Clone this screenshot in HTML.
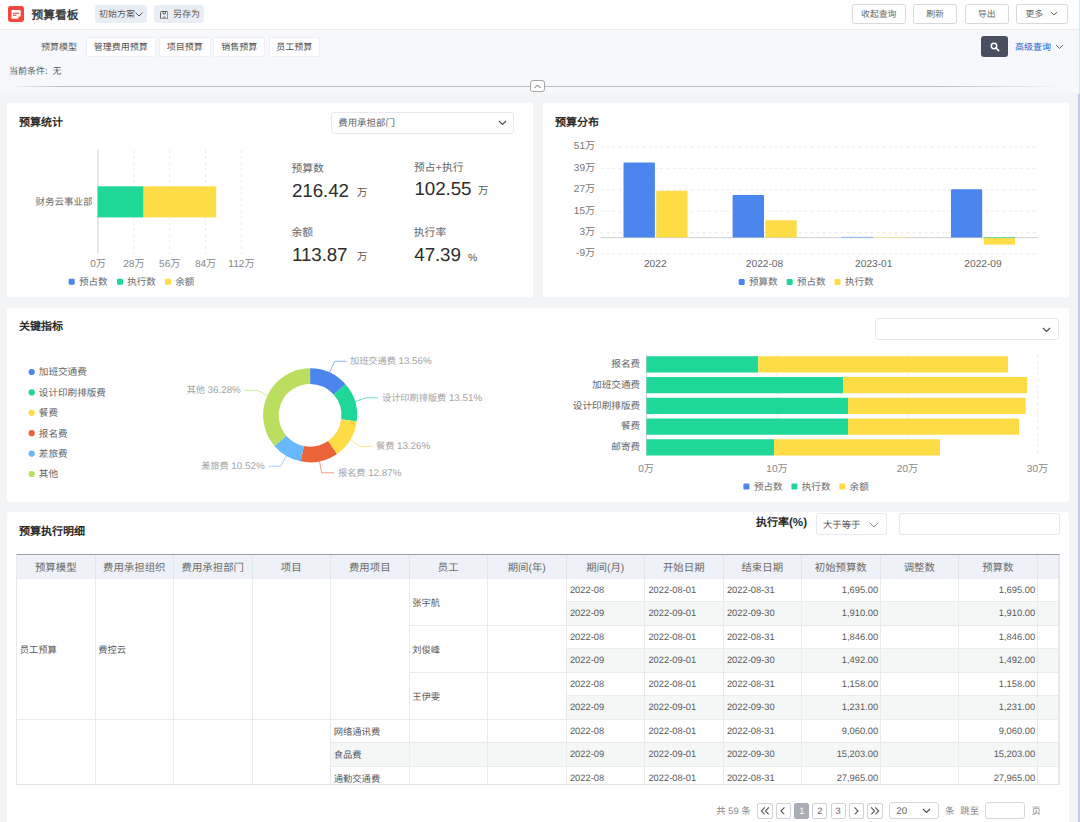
<!DOCTYPE html>
<html lang="zh-CN">
<head>
<meta charset="utf-8">
<title>预算看板</title>
<style>
*{box-sizing:border-box;margin:0;padding:0}
html,body{width:1080px;height:822px;overflow:hidden}
body{position:relative;background:#f3f4f6;font-family:"Liberation Sans",sans-serif;font-size:9.4px;color:#555;line-height:1;text-rendering:geometricPrecision}
svg text{text-rendering:geometricPrecision}
.abs{position:absolute}
.t{position:absolute;white-space:nowrap;line-height:12px;height:12px}
.c{transform:translateX(-50%)}
.r{transform:translateX(-100%)}
/* header */
#hdr{position:absolute;left:0;top:0;width:1080px;height:30px;background:#fff;border-bottom:1px solid #ebebee}
#logo{position:absolute;left:8.3px;top:5.9px;width:16px;height:16px}
#title{position:absolute;left:31.6px;top:8.2px;font-size:11.7px;font-weight:bold;color:#404040;line-height:15px;white-space:nowrap}
.pill{position:absolute;top:5px;height:18px;background:#e9eef5;border-radius:3px;color:#5a5a5a;font-size:9px;line-height:19.4px;white-space:nowrap}
.hbtn{position:absolute;top:4px;height:19.5px;border:1px solid #d9d9d9;border-radius:2.5px;background:#fff;color:#6a6a6a;font-size:8.85px;line-height:19px;text-align:center;white-space:nowrap}
/* filter */
#flt{position:absolute;left:0;top:29.6px;width:1080px;height:63.5px;background:#f7f8fc}
#flt .t{font-size:9px}
.fbtn{position:absolute;top:8px;height:19.5px;background:#fff;border:1px solid #eef0f4;border-radius:2px;color:#505050;font-size:9px;line-height:18.2px;text-align:center;white-space:nowrap}
/* cards */
.card{position:absolute;background:#fff;border-radius:3px}
.ct{position:absolute;font-size:11px;font-weight:bold;color:#2b2b2b;line-height:14px;white-space:nowrap}
.sel{position:absolute;border:1px solid #e7e9ec;border-radius:3px;background:#fff}

.td{position:absolute;border-right:1px solid #e9ebee;border-bottom:1px solid #e9ebee;background:#fff;padding:2.4px 2.7px 0;font-size:9.3px;color:#5a5a5a;white-space:nowrap;overflow:hidden}
.th{background:#eef1f7;color:#6a6a6a;font-size:10.4px;border-right:1px solid #e2e5ea;border-bottom:none;padding:3px 0 0 0}
.num{color:#5a5a5a;font-size:9.35px;padding:1.2px 1.3px 0 3.4px}
.pb{position:absolute;top:802.5px;height:16px;border:1px solid #cfd2d6;border-radius:2px;background:#fff;color:#666;font-size:9.3px;line-height:14px;text-align:center}
.pb svg{position:absolute;left:50%;top:50%;transform:translate(-50%,-50%)}

</style>
</head>
<body>

<!-- ===== header ===== -->
<div id="hdr">
  <svg id="logo" viewBox="0 0 16 16"><rect width="16" height="16" rx="2.4" fill="#f3483b"/><path d="M4.4 3.9h7.4a.9.9 0 0 1 .9.9v4.9l-3 3H4.4a.9.9 0 0 1-.9-.9v-7a.9.9 0 0 1 .9-.9z" fill="#fff"/><path d="M12.7 9.7H10.6a.9.9 0 0 0-.9.9v2.1z" fill="#fbc49a"/><rect x="5" y="6.7" width="6.2" height="1.1" fill="#f3483b"/><rect x="5" y="8.7" width="3.4" height="1.1" fill="#f3483b"/></svg>
  <div id="title">预算看板</div>
  <div class="pill" style="left:94.8px;width:52.6px;padding-left:4.2px">初始方案<svg class="abs" style="left:40.6px;top:7.2px" width="8" height="5" viewBox="0 0 8 5"><path d="M.6.6 4 4 7.4.6" fill="none" stroke="#555" stroke-width="1"/></svg></div>
  <div class="pill" style="left:154px;width:49.8px;padding-left:19px">另存为<svg class="abs" style="left:5.8px;top:5.5px" width="8.4" height="8.4" viewBox="0 0 8.4 8.4"><rect x=".5" y=".5" width="7.4" height="7.4" rx="1" fill="none" stroke="#555" stroke-width=".9"/><path d="M3 .6v2.3h2.4V.6M2.7 6.2h3" fill="none" stroke="#555" stroke-width=".85"/></svg></div>
  <div class="hbtn" style="left:851.5px;width:54.5px">收起查询</div>
  <div class="hbtn" style="left:913px;width:44px">刷新</div>
  <div class="hbtn" style="left:964.5px;width:44.5px">导出</div>
  <div class="hbtn" style="left:1016px;width:51.5px;text-align:left;padding-left:8.5px">更多<svg class="abs" style="left:33px;top:6px" width="8" height="5" viewBox="0 0 8 5"><path d="M.8.8 4 4 7.2.8" fill="none" stroke="#666" stroke-width="1"/></svg></div>
</div>

<!-- ===== filter panel ===== -->
<div id="flt"><div class="abs" style="left:0;top:-0.6px;width:1080px;height:63.5px">
  <div class="t" style="left:41px;top:12px;color:#5a5a5a">预算模型</div>
  <div class="fbtn" style="left:86px;width:69.5px">管理费用预算</div>
  <div class="fbtn" style="left:159px;width:51.5px">项目预算</div>
  <div class="fbtn" style="left:213.3px;width:51.7px">销售预算</div>
  <div class="fbtn" style="left:268.5px;width:51.5px">员工预算</div>
  <div class="t" style="left:9px;top:35.8px;color:#5a5a5a">当前条件:&nbsp; 无</div>
  <div class="abs" style="left:981px;top:7px;width:27px;height:20.5px;background:#4a4f5f;border-radius:3px">
    <svg class="abs" style="left:9px;top:5.5px" width="10" height="10" viewBox="0 0 10 10"><circle cx="4" cy="4" r="2.7" fill="none" stroke="#fff" stroke-width="1.5"/><path d="M6 6l2.6 2.6" stroke="#fff" stroke-width="1.7" stroke-linecap="round"/></svg>
  </div>
  <div class="t" style="left:1015px;top:11.5px;font-size:9px;color:#2c66cc">高级查询</div>
  <svg class="abs" style="left:1054.5px;top:15px" width="9" height="6" viewBox="0 0 9 6"><path d="M1 1l3.5 3.5L8 1" fill="none" stroke="#666" stroke-width="1"/></svg>
  <div class="abs" style="left:9px;top:56.8px;width:1056px;height:1px;background:linear-gradient(90deg,rgba(185,188,192,0),#b9bcc0 5%,#b9bcc0 88%,rgba(185,188,192,0))"></div>
  <div class="abs" style="left:530px;top:51.2px;width:15px;height:11.6px;border:1px solid #a6a6a6;border-radius:3px;background:#fff">
    <svg class="abs" style="left:3px;top:2.6px" width="7" height="4.5" viewBox="0 0 7 4.5"><path d="M.5 4 3.5 1 6.5 4" fill="none" stroke="#666" stroke-width="1"/></svg>
  </div>
</div></div>

<!-- ===== cards ===== -->
<div class="card" id="c1" style="left:7px;top:102.5px;width:526px;height:194.5px"></div>
<div class="card" id="c2" style="left:543px;top:102.5px;width:526px;height:194.5px"></div>
<div class="card" id="c3" style="left:7px;top:307.5px;width:1062px;height:194.5px"></div>
<div class="card" id="c4" style="left:7px;top:511.5px;width:1062px;height:320px"></div>

<svg class="abs" style="left:0;top:0" width="1080" height="822" viewBox="0 0 1080 822" font-family="Liberation Sans, sans-serif">
<path d="M133.85 150.0V253.7" stroke="#ececec" stroke-width="1" stroke-dasharray="3 3"/>
<path d="M169.70 150.0V253.7" stroke="#ececec" stroke-width="1" stroke-dasharray="3 3"/>
<path d="M205.55 150.0V253.7" stroke="#ececec" stroke-width="1" stroke-dasharray="3 3"/>
<path d="M241.40 150.0V253.7" stroke="#ececec" stroke-width="1" stroke-dasharray="3 3"/>
<path d="M98.0 150.0V253.7" stroke="#cfcfcf" stroke-width="1"/>
<rect x="97.6" y="186.3" width="46.00" height="31.1" fill="#1fd797"/>
<rect x="143.6" y="186.3" width="72.60" height="31.1" fill="#fddc46"/>
<text x="92.40" y="204.72" font-size="9.5" fill="#6b6b6b" text-anchor="end">财务云事业部</text>
<text x="98.00" y="267.34" font-size="10.1" fill="#888" text-anchor="middle">0万</text>
<text x="133.85" y="267.34" font-size="10.1" fill="#888" text-anchor="middle">28万</text>
<text x="169.70" y="267.34" font-size="10.1" fill="#888" text-anchor="middle">56万</text>
<text x="205.55" y="267.34" font-size="10.1" fill="#888" text-anchor="middle">84万</text>
<text x="241.40" y="267.34" font-size="10.1" fill="#888" text-anchor="middle">112万</text>
<rect x="68.7" y="278.7" width="6" height="6" rx="1.2" fill="#4b86ee"/>
<text x="79.00" y="284.84" font-size="9.55" fill="#6b6b6b" text-anchor="start">预占数</text>
<rect x="117" y="278.7" width="6" height="6" rx="1.2" fill="#1fd797"/>
<text x="127.20" y="284.84" font-size="9.55" fill="#6b6b6b" text-anchor="start">执行数</text>
<rect x="165" y="278.7" width="6" height="6" rx="1.2" fill="#fddc46"/>
<text x="175.20" y="284.84" font-size="9.55" fill="#6b6b6b" text-anchor="start">余额</text>
<path d="M600.5 147.00H1038.0" stroke="#ebebeb" stroke-width="1" stroke-dasharray="3 3"/>
<text x="595.20" y="149.44" font-size="10.1" fill="#777" text-anchor="end">51万</text>
<path d="M600.5 168.40H1038.0" stroke="#ebebeb" stroke-width="1" stroke-dasharray="3 3"/>
<text x="595.20" y="170.84" font-size="10.1" fill="#777" text-anchor="end">39万</text>
<path d="M600.5 189.80H1038.0" stroke="#ebebeb" stroke-width="1" stroke-dasharray="3 3"/>
<text x="595.20" y="192.24" font-size="10.1" fill="#777" text-anchor="end">27万</text>
<path d="M600.5 211.20H1038.0" stroke="#ebebeb" stroke-width="1" stroke-dasharray="3 3"/>
<text x="595.20" y="213.64" font-size="10.1" fill="#777" text-anchor="end">15万</text>
<path d="M600.5 232.60H1038.0" stroke="#ebebeb" stroke-width="1" stroke-dasharray="3 3"/>
<text x="595.20" y="235.04" font-size="10.1" fill="#777" text-anchor="end">3万</text>
<path d="M600.5 254.00H1038.0" stroke="#ebebeb" stroke-width="1" stroke-dasharray="3 3"/>
<text x="595.20" y="256.44" font-size="10.1" fill="#777" text-anchor="end">-9万</text>
<path d="M600.5 237.6H1038.0" stroke="#cfcfcf" stroke-width="1"/>
<path d="M623.50 237.6V163.70Q623.50 162.50 624.70 162.50H653.70Q654.90 162.50 654.90 163.70V237.6Z" fill="#4b86ee"/>
<path d="M656.20 237.6V192.00Q656.20 190.80 657.40 190.80H686.40Q687.60 190.80 687.60 192.00V237.6Z" fill="#fddc46"/>
<path d="M732.60 237.6V196.20Q732.60 195.00 733.80 195.00H762.80Q764.00 195.00 764.00 196.20V237.6Z" fill="#4b86ee"/>
<path d="M765.30 237.6V221.50Q765.30 220.30 766.50 220.30H795.50Q796.70 220.30 796.70 221.50V237.6Z" fill="#fddc46"/>
<rect x="841.6" y="236.9" width="31.4" height="0.9" fill="#7fb0f5"/>
<rect x="874.4" y="236.9" width="31.4" height="0.9" fill="#f3e79a"/>
<path d="M951.00 237.6V190.50Q951.00 189.30 952.20 189.30H981.00Q982.20 189.30 982.20 190.50V237.6Z" fill="#4b86ee"/>
<rect x="983.8" y="237.6" width="31.2" height="7" fill="#fddc46"/>
<rect x="983.8" y="237.1" width="31.2" height="1" fill="#6fd9a0"/>
<text x="655.25" y="267.42" font-size="10.2" fill="#666" text-anchor="middle">2022</text>
<text x="764.50" y="267.42" font-size="10.2" fill="#666" text-anchor="middle">2022-08</text>
<text x="873.75" y="267.42" font-size="10.2" fill="#666" text-anchor="middle">2023-01</text>
<text x="983.00" y="267.42" font-size="10.2" fill="#666" text-anchor="middle">2022-09</text>
<rect x="738.7" y="279" width="6" height="6" rx="1.2" fill="#4b86ee"/>
<text x="749.00" y="285.44" font-size="9.55" fill="#6b6b6b" text-anchor="start">预算数</text>
<rect x="786.7" y="279" width="6" height="6" rx="1.2" fill="#1fd797"/>
<text x="797.00" y="285.44" font-size="9.55" fill="#6b6b6b" text-anchor="start">预占数</text>
<rect x="834.5" y="279" width="6" height="6" rx="1.2" fill="#fddc46"/>
<text x="845.00" y="285.44" font-size="9.55" fill="#6b6b6b" text-anchor="start">执行数</text>
<circle cx="31.7" cy="372.00" r="3.1" fill="#4b86ee"/>
<text x="38.80" y="375.46" font-size="9.6" fill="#666" text-anchor="start">加班交通费</text>
<circle cx="31.7" cy="392.40" r="3.1" fill="#1fd797"/>
<text x="38.80" y="395.86" font-size="9.6" fill="#666" text-anchor="start">设计印刷排版费</text>
<circle cx="31.7" cy="412.80" r="3.1" fill="#fddc46"/>
<text x="38.80" y="416.26" font-size="9.6" fill="#666" text-anchor="start">餐费</text>
<circle cx="31.7" cy="433.20" r="3.1" fill="#eb6339"/>
<text x="38.80" y="436.66" font-size="9.6" fill="#666" text-anchor="start">报名费</text>
<circle cx="31.7" cy="453.60" r="3.1" fill="#68b8fd"/>
<text x="38.80" y="457.06" font-size="9.6" fill="#666" text-anchor="start">差旅费</text>
<circle cx="31.7" cy="474.00" r="3.1" fill="#bbde5e"/>
<text x="38.80" y="477.46" font-size="9.6" fill="#666" text-anchor="start">其他</text>
<path d="M310.10 368.30A47.0 47.0 0 0 1 345.47 384.35L333.73 394.62A31.4 31.4 0 0 0 310.10 383.90Z" fill="#4b86ee"/>
<path d="M345.47 384.35A47.0 47.0 0 0 1 356.70 421.40L341.23 419.37A31.4 31.4 0 0 0 333.73 394.62Z" fill="#1fd797"/>
<path d="M356.70 421.40A47.0 47.0 0 0 1 336.93 453.89L328.03 441.08A31.4 31.4 0 0 0 341.23 419.37Z" fill="#fddc46"/>
<path d="M336.93 453.89A47.0 47.0 0 0 1 300.71 461.35L303.83 446.07A31.4 31.4 0 0 0 328.03 441.08Z" fill="#eb6339"/>
<path d="M300.71 461.35A47.0 47.0 0 0 1 274.42 445.89L286.26 435.74A31.4 31.4 0 0 0 303.83 446.07Z" fill="#68b8fd"/>
<path d="M274.42 445.89A47.0 47.0 0 0 1 310.10 368.30L310.10 383.90A31.4 31.4 0 0 0 286.26 435.74Z" fill="#bbde5e"/>
<path d="M329.52 372.50L334.7 361.3H346.5" fill="none" stroke="#4b86ee" stroke-width="0.9" stroke-opacity="0.7"/>
<text x="350.00" y="364.01" font-size="9.2" fill="#a3a3a3" text-anchor="start">加班交通费 <tspan font-size="9.8">13.56%</tspan></text>
<path d="M355.08 401.66L366.0 397.8H378.0" fill="none" stroke="#1fd797" stroke-width="0.9" stroke-opacity="0.7"/>
<text x="382.00" y="400.51" font-size="9.2" fill="#a3a3a3" text-anchor="start">设计印刷排版费 <tspan font-size="9.8">13.51%</tspan></text>
<path d="M350.25 439.73L360.0 446.4H372.6" fill="none" stroke="#fddc46" stroke-width="0.9" stroke-opacity="0.7"/>
<text x="376.00" y="449.11" font-size="9.2" fill="#a3a3a3" text-anchor="start">餐费 <tspan font-size="9.8">13.26%</tspan></text>
<path d="M319.59 461.33L321.6 472.8H334.0" fill="none" stroke="#eb6339" stroke-width="0.9" stroke-opacity="0.7"/>
<text x="338.00" y="475.51" font-size="9.2" fill="#a3a3a3" text-anchor="start">报名费 <tspan font-size="9.8">12.87%</tspan></text>
<path d="M286.28 455.81L280.7 466.2H268.9" fill="none" stroke="#68b8fd" stroke-width="0.9" stroke-opacity="0.7"/>
<text x="264.60" y="468.91" font-size="9.2" fill="#a3a3a3" text-anchor="end">差旅费 <tspan font-size="9.8">10.52%</tspan></text>
<path d="M267.40 395.66L257.6 390.4H244.6" fill="none" stroke="#bbde5e" stroke-width="0.9" stroke-opacity="0.7"/>
<text x="240.80" y="393.11" font-size="9.2" fill="#a3a3a3" text-anchor="end">其他 <tspan font-size="9.8">36.28%</tspan></text>
<path d="M907.5 354.5V456.3" stroke="#ececec" stroke-width="1" stroke-dasharray="3 3"/>
<path d="M777 354.5V456.3" stroke="#ececec" stroke-width="1" stroke-dasharray="3 3"/>
<path d="M1037.5 354.5V456.3" stroke="#ededed" stroke-width="1" stroke-dasharray="3 3"/>
<path d="M646.5 354.5V456.3" stroke="#cfcfcf" stroke-width="1"/>
<rect x="646.5" y="356.25" width="111.75" height="16.25" fill="#1fd797"/>
<rect x="758.25" y="356.25" width="249.75" height="16.25" fill="#fddc46"/>
<text x="640.20" y="367.22" font-size="9.65" fill="#666" text-anchor="end">报名费</text>
<rect x="646.5" y="377.00" width="196.80" height="16.25" fill="#1fd797"/>
<rect x="843.3" y="377.00" width="183.90" height="16.25" fill="#fddc46"/>
<text x="640.20" y="387.97" font-size="9.65" fill="#666" text-anchor="end">加班交通费</text>
<rect x="646.5" y="397.75" width="201.50" height="16.25" fill="#1fd797"/>
<rect x="848.0" y="397.75" width="177.70" height="16.25" fill="#fddc46"/>
<text x="640.20" y="408.72" font-size="9.65" fill="#666" text-anchor="end">设计印刷排版费</text>
<rect x="646.5" y="418.50" width="201.50" height="16.25" fill="#1fd797"/>
<rect x="848.0" y="418.50" width="171.00" height="16.25" fill="#fddc46"/>
<text x="640.20" y="429.47" font-size="9.65" fill="#666" text-anchor="end">餐费</text>
<rect x="646.5" y="439.25" width="127.50" height="16.25" fill="#1fd797"/>
<rect x="774.0" y="439.25" width="166.00" height="16.25" fill="#fddc46"/>
<text x="640.20" y="450.22" font-size="9.65" fill="#666" text-anchor="end">邮寄费</text>
<text x="646.00" y="471.64" font-size="10.1" fill="#888" text-anchor="middle">0万</text>
<text x="777.00" y="471.64" font-size="10.1" fill="#888" text-anchor="middle">10万</text>
<text x="907.50" y="471.64" font-size="10.1" fill="#888" text-anchor="middle">20万</text>
<text x="1037.50" y="471.64" font-size="10.1" fill="#888" text-anchor="middle">30万</text>
<rect x="743.4" y="483.5" width="6" height="6" rx="1.2" fill="#4b86ee"/>
<text x="754.00" y="489.94" font-size="9.55" fill="#6b6b6b" text-anchor="start">预占数</text>
<rect x="791.4" y="483.5" width="6" height="6" rx="1.2" fill="#1fd797"/>
<text x="801.80" y="489.94" font-size="9.55" fill="#6b6b6b" text-anchor="start">执行数</text>
<rect x="839.3" y="483.5" width="6" height="6" rx="1.2" fill="#fddc46"/>
<text x="849.60" y="489.94" font-size="9.55" fill="#6b6b6b" text-anchor="start">余额</text>
</svg>
<div class="ct" style="left:19.0px;top:116.3px">预算统计</div>
<div class="ct" style="left:555.0px;top:116.2px">预算分布</div>
<div class="ct" style="left:19.0px;top:320.4px">关键指标</div>
<div class="ct" style="left:19.0px;top:524.9px">预算执行明细</div>
<div class="sel" style="left:331.2px;top:111.8px;width:182.5px;height:21.8px"><span class="t" style="left:6px;top:5.6px;color:#666;font-size:9.45px">费用承担部门</span><svg class="abs" style="right:6.2px;top:7.2px" width="9" height="6" viewBox="0 0 9 6"><path d="M1 1l3.5 3.5L8 1" fill="none" stroke="#4a4a4a" stroke-width="1.15"/></svg></div>
<div class="sel" style="left:875.3px;top:318px;width:183.6px;height:21.8px"><svg class="abs" style="right:7.3px;top:7.8px" width="9" height="6" viewBox="0 0 9 6"><path d="M1 1l3.5 3.5L8 1" fill="none" stroke="#4a4a4a" stroke-width="1.15"/></svg></div>
<div class="t" style="left:291.5px;top:162.0px;font-size:10.8px;line-height:14px;height:14px;color:#666">预算数</div>
<div class="t" style="left:292.0px;top:181.7px;font-size:18.8px;line-height:18.8px;height:18.8px;color:#2e2e2e;letter-spacing:-0.1px">216.42</div>
<div class="t" style="left:357px;top:187.0px;font-size:10.4px;line-height:14px;height:14px;color:#555">万</div>
<div class="t" style="left:414px;top:161.2px;font-size:10.8px;line-height:14px;height:14px;color:#666">预占+执行</div>
<div class="t" style="left:414.5px;top:179.7px;font-size:18.8px;line-height:18.8px;height:18.8px;color:#2e2e2e;letter-spacing:-0.1px">102.55</div>
<div class="t" style="left:478px;top:185.3px;font-size:10.4px;line-height:14px;height:14px;color:#555">万</div>
<div class="t" style="left:291.5px;top:225.9px;font-size:10.8px;line-height:14px;height:14px;color:#666">余额</div>
<div class="t" style="left:292.0px;top:246.3px;font-size:18.8px;line-height:18.8px;height:18.8px;color:#2e2e2e;letter-spacing:-0.1px">113.87</div>
<div class="t" style="left:357px;top:251.3px;font-size:10.4px;line-height:14px;height:14px;color:#555">万</div>
<div class="t" style="left:413.8px;top:226.3px;font-size:10.8px;line-height:14px;height:14px;color:#666">执行率</div>
<div class="t" style="left:414.3px;top:246.0px;font-size:18.8px;line-height:18.8px;height:18.8px;color:#2e2e2e;letter-spacing:-0.1px">47.39</div>
<div class="t" style="left:468px;top:252.2px;font-size:10.4px;line-height:14px;height:14px;color:#555">%</div>
<div class="t" style="left:756px;top:516.2px;font-size:11px;font-weight:bold;color:#2b2b2b;line-height:14px;height:14px">执行率<span style="font-size:11.6px">(%)</span></div>
<div class="sel" style="left:816.2px;top:513.4px;width:70.6px;height:21.4px"><span class="t" style="left:5.8px;top:4.4px;color:#555">大于等于</span><svg class="abs" style="right:6.8px;top:7.4px" width="10" height="6" viewBox="0 0 10 6"><path d="M.8.8 5 5 9.2.8" fill="none" stroke="#8a8a8a" stroke-width="1"/></svg></div>
<div class="sel" style="left:899.2px;top:513.4px;width:160.6px;height:21.4px"></div>
<div class="abs" style="left:16.0px;top:554px;width:1044.0px;height:231.0px;overflow:hidden;border-top:1px solid #9aa1ab;border-bottom:1px solid #e3e5e8;border-right:1px solid #dfe2e6;border-left:1px solid #e6e8eb">
<div class="td th" style="left:0.00px;top:0.00px;width:78.50px;height:23.50px;line-height:21.50px;text-align:center;">预算模型</div>
<div class="td th" style="left:78.50px;top:0.00px;width:78.50px;height:23.50px;line-height:21.50px;text-align:center;">费用承担组织</div>
<div class="td th" style="left:157.00px;top:0.00px;width:78.50px;height:23.50px;line-height:21.50px;text-align:center;">费用承担部门</div>
<div class="td th" style="left:235.50px;top:0.00px;width:78.50px;height:23.50px;line-height:21.50px;text-align:center;">项目</div>
<div class="td th" style="left:314.00px;top:0.00px;width:78.50px;height:23.50px;line-height:21.50px;text-align:center;">费用项目</div>
<div class="td th" style="left:392.50px;top:0.00px;width:78.50px;height:23.50px;line-height:21.50px;text-align:center;">员工</div>
<div class="td th" style="left:471.00px;top:0.00px;width:78.50px;height:23.50px;line-height:21.50px;text-align:center;">期间(年)</div>
<div class="td th" style="left:549.50px;top:0.00px;width:78.50px;height:23.50px;line-height:21.50px;text-align:center;">期间(月)</div>
<div class="td th" style="left:628.00px;top:0.00px;width:78.50px;height:23.50px;line-height:21.50px;text-align:center;">开始日期</div>
<div class="td th" style="left:706.50px;top:0.00px;width:78.50px;height:23.50px;line-height:21.50px;text-align:center;">结束日期</div>
<div class="td th" style="left:785.00px;top:0.00px;width:78.50px;height:23.50px;line-height:21.50px;text-align:center;">初始预算数</div>
<div class="td th" style="left:863.50px;top:0.00px;width:78.50px;height:23.50px;line-height:21.50px;text-align:center;">调整数</div>
<div class="td th" style="left:942.00px;top:0.00px;width:78.50px;height:23.50px;line-height:21.50px;text-align:center;">预算数</div>
<div class="td th" style="left:1020.50px;top:0.00px;width:21.50px;height:23.50px;line-height:21.50px;text-align:center;"></div>
<div class="td " style="left:0.00px;top:23.50px;width:78.50px;height:141.00px;line-height:139.00px;text-align:left;">员工预算</div>
<div class="td " style="left:78.50px;top:23.50px;width:78.50px;height:141.00px;line-height:139.00px;text-align:left;">费控云</div>
<div class="td " style="left:157.00px;top:23.50px;width:78.50px;height:141.00px;line-height:139.00px;text-align:left;"></div>
<div class="td " style="left:235.50px;top:23.50px;width:78.50px;height:141.00px;line-height:139.00px;text-align:left;"></div>
<div class="td " style="left:314.00px;top:23.50px;width:78.50px;height:141.00px;line-height:139.00px;text-align:left;"></div>
<div class="td " style="left:392.50px;top:23.50px;width:78.50px;height:47.00px;line-height:45.00px;text-align:left;">张宇航</div>
<div class="td " style="left:471.00px;top:23.50px;width:78.50px;height:47.00px;line-height:45.00px;text-align:left;"></div>
<div class="td " style="left:392.50px;top:70.50px;width:78.50px;height:47.00px;line-height:45.00px;text-align:left;">刘俊峰</div>
<div class="td " style="left:471.00px;top:70.50px;width:78.50px;height:47.00px;line-height:45.00px;text-align:left;"></div>
<div class="td " style="left:392.50px;top:117.50px;width:78.50px;height:47.00px;line-height:45.00px;text-align:left;">王伊雯</div>
<div class="td " style="left:471.00px;top:117.50px;width:78.50px;height:47.00px;line-height:45.00px;text-align:left;"></div>
<div class="td " style="left:0.00px;top:164.50px;width:78.50px;height:94.00px;line-height:92.00px;text-align:left;"></div>
<div class="td " style="left:78.50px;top:164.50px;width:78.50px;height:94.00px;line-height:92.00px;text-align:left;"></div>
<div class="td " style="left:157.00px;top:164.50px;width:78.50px;height:94.00px;line-height:92.00px;text-align:left;"></div>
<div class="td " style="left:235.50px;top:164.50px;width:78.50px;height:94.00px;line-height:92.00px;text-align:left;"></div>
<div class="td " style="left:314.00px;top:164.50px;width:78.50px;height:23.50px;line-height:21.50px;text-align:left;">网络通讯费</div>
<div class="td " style="left:392.50px;top:164.50px;width:78.50px;height:23.50px;line-height:21.50px;text-align:left;"></div>
<div class="td " style="left:471.00px;top:164.50px;width:78.50px;height:23.50px;line-height:21.50px;text-align:left;"></div>
<div class="td " style="left:314.00px;top:188.00px;width:78.50px;height:23.50px;line-height:21.50px;text-align:left;background:#f5f7f7;">食品费</div>
<div class="td " style="left:392.50px;top:188.00px;width:78.50px;height:23.50px;line-height:21.50px;text-align:left;background:#f5f7f7;"></div>
<div class="td " style="left:471.00px;top:188.00px;width:78.50px;height:23.50px;line-height:21.50px;text-align:left;background:#f5f7f7;"></div>
<div class="td " style="left:314.00px;top:211.50px;width:78.50px;height:23.50px;line-height:21.50px;text-align:left;">通勤交通费</div>
<div class="td " style="left:392.50px;top:211.50px;width:78.50px;height:23.50px;line-height:21.50px;text-align:left;"></div>
<div class="td " style="left:471.00px;top:211.50px;width:78.50px;height:23.50px;line-height:21.50px;text-align:left;"></div>
<div class="td num" style="left:549.50px;top:23.50px;width:78.50px;height:23.50px;line-height:21.50px;text-align:left;">2022-08</div>
<div class="td num" style="left:628.00px;top:23.50px;width:78.50px;height:23.50px;line-height:21.50px;text-align:left;">2022-08-01</div>
<div class="td num" style="left:706.50px;top:23.50px;width:78.50px;height:23.50px;line-height:21.50px;text-align:left;">2022-08-31</div>
<div class="td num" style="left:785.00px;top:23.50px;width:78.50px;height:23.50px;line-height:21.50px;text-align:right;">1,695.00</div>
<div class="td num" style="left:863.50px;top:23.50px;width:78.50px;height:23.50px;line-height:21.50px;text-align:right;"></div>
<div class="td num" style="left:942.00px;top:23.50px;width:78.50px;height:23.50px;line-height:21.50px;text-align:right;">1,695.00</div>
<div class="td " style="left:1020.50px;top:23.50px;width:21.50px;height:23.50px;line-height:21.50px;text-align:left;"></div>
<div class="td num" style="left:549.50px;top:47.00px;width:78.50px;height:23.50px;line-height:21.50px;text-align:left;background:#f5f7f7;">2022-09</div>
<div class="td num" style="left:628.00px;top:47.00px;width:78.50px;height:23.50px;line-height:21.50px;text-align:left;background:#f5f7f7;">2022-09-01</div>
<div class="td num" style="left:706.50px;top:47.00px;width:78.50px;height:23.50px;line-height:21.50px;text-align:left;background:#f5f7f7;">2022-09-30</div>
<div class="td num" style="left:785.00px;top:47.00px;width:78.50px;height:23.50px;line-height:21.50px;text-align:right;background:#f5f7f7;">1,910.00</div>
<div class="td num" style="left:863.50px;top:47.00px;width:78.50px;height:23.50px;line-height:21.50px;text-align:right;background:#f5f7f7;"></div>
<div class="td num" style="left:942.00px;top:47.00px;width:78.50px;height:23.50px;line-height:21.50px;text-align:right;background:#f5f7f7;">1,910.00</div>
<div class="td " style="left:1020.50px;top:47.00px;width:21.50px;height:23.50px;line-height:21.50px;text-align:left;background:#f5f7f7;"></div>
<div class="td num" style="left:549.50px;top:70.50px;width:78.50px;height:23.50px;line-height:21.50px;text-align:left;">2022-08</div>
<div class="td num" style="left:628.00px;top:70.50px;width:78.50px;height:23.50px;line-height:21.50px;text-align:left;">2022-08-01</div>
<div class="td num" style="left:706.50px;top:70.50px;width:78.50px;height:23.50px;line-height:21.50px;text-align:left;">2022-08-31</div>
<div class="td num" style="left:785.00px;top:70.50px;width:78.50px;height:23.50px;line-height:21.50px;text-align:right;">1,846.00</div>
<div class="td num" style="left:863.50px;top:70.50px;width:78.50px;height:23.50px;line-height:21.50px;text-align:right;"></div>
<div class="td num" style="left:942.00px;top:70.50px;width:78.50px;height:23.50px;line-height:21.50px;text-align:right;">1,846.00</div>
<div class="td " style="left:1020.50px;top:70.50px;width:21.50px;height:23.50px;line-height:21.50px;text-align:left;"></div>
<div class="td num" style="left:549.50px;top:94.00px;width:78.50px;height:23.50px;line-height:21.50px;text-align:left;background:#f5f7f7;">2022-09</div>
<div class="td num" style="left:628.00px;top:94.00px;width:78.50px;height:23.50px;line-height:21.50px;text-align:left;background:#f5f7f7;">2022-09-01</div>
<div class="td num" style="left:706.50px;top:94.00px;width:78.50px;height:23.50px;line-height:21.50px;text-align:left;background:#f5f7f7;">2022-09-30</div>
<div class="td num" style="left:785.00px;top:94.00px;width:78.50px;height:23.50px;line-height:21.50px;text-align:right;background:#f5f7f7;">1,492.00</div>
<div class="td num" style="left:863.50px;top:94.00px;width:78.50px;height:23.50px;line-height:21.50px;text-align:right;background:#f5f7f7;"></div>
<div class="td num" style="left:942.00px;top:94.00px;width:78.50px;height:23.50px;line-height:21.50px;text-align:right;background:#f5f7f7;">1,492.00</div>
<div class="td " style="left:1020.50px;top:94.00px;width:21.50px;height:23.50px;line-height:21.50px;text-align:left;background:#f5f7f7;"></div>
<div class="td num" style="left:549.50px;top:117.50px;width:78.50px;height:23.50px;line-height:21.50px;text-align:left;">2022-08</div>
<div class="td num" style="left:628.00px;top:117.50px;width:78.50px;height:23.50px;line-height:21.50px;text-align:left;">2022-08-01</div>
<div class="td num" style="left:706.50px;top:117.50px;width:78.50px;height:23.50px;line-height:21.50px;text-align:left;">2022-08-31</div>
<div class="td num" style="left:785.00px;top:117.50px;width:78.50px;height:23.50px;line-height:21.50px;text-align:right;">1,158.00</div>
<div class="td num" style="left:863.50px;top:117.50px;width:78.50px;height:23.50px;line-height:21.50px;text-align:right;"></div>
<div class="td num" style="left:942.00px;top:117.50px;width:78.50px;height:23.50px;line-height:21.50px;text-align:right;">1,158.00</div>
<div class="td " style="left:1020.50px;top:117.50px;width:21.50px;height:23.50px;line-height:21.50px;text-align:left;"></div>
<div class="td num" style="left:549.50px;top:141.00px;width:78.50px;height:23.50px;line-height:21.50px;text-align:left;background:#f5f7f7;">2022-09</div>
<div class="td num" style="left:628.00px;top:141.00px;width:78.50px;height:23.50px;line-height:21.50px;text-align:left;background:#f5f7f7;">2022-09-01</div>
<div class="td num" style="left:706.50px;top:141.00px;width:78.50px;height:23.50px;line-height:21.50px;text-align:left;background:#f5f7f7;">2022-09-30</div>
<div class="td num" style="left:785.00px;top:141.00px;width:78.50px;height:23.50px;line-height:21.50px;text-align:right;background:#f5f7f7;">1,231.00</div>
<div class="td num" style="left:863.50px;top:141.00px;width:78.50px;height:23.50px;line-height:21.50px;text-align:right;background:#f5f7f7;"></div>
<div class="td num" style="left:942.00px;top:141.00px;width:78.50px;height:23.50px;line-height:21.50px;text-align:right;background:#f5f7f7;">1,231.00</div>
<div class="td " style="left:1020.50px;top:141.00px;width:21.50px;height:23.50px;line-height:21.50px;text-align:left;background:#f5f7f7;"></div>
<div class="td num" style="left:549.50px;top:164.50px;width:78.50px;height:23.50px;line-height:21.50px;text-align:left;">2022-08</div>
<div class="td num" style="left:628.00px;top:164.50px;width:78.50px;height:23.50px;line-height:21.50px;text-align:left;">2022-08-01</div>
<div class="td num" style="left:706.50px;top:164.50px;width:78.50px;height:23.50px;line-height:21.50px;text-align:left;">2022-08-31</div>
<div class="td num" style="left:785.00px;top:164.50px;width:78.50px;height:23.50px;line-height:21.50px;text-align:right;">9,060.00</div>
<div class="td num" style="left:863.50px;top:164.50px;width:78.50px;height:23.50px;line-height:21.50px;text-align:right;"></div>
<div class="td num" style="left:942.00px;top:164.50px;width:78.50px;height:23.50px;line-height:21.50px;text-align:right;">9,060.00</div>
<div class="td " style="left:1020.50px;top:164.50px;width:21.50px;height:23.50px;line-height:21.50px;text-align:left;"></div>
<div class="td num" style="left:549.50px;top:188.00px;width:78.50px;height:23.50px;line-height:21.50px;text-align:left;background:#f5f7f7;">2022-09</div>
<div class="td num" style="left:628.00px;top:188.00px;width:78.50px;height:23.50px;line-height:21.50px;text-align:left;background:#f5f7f7;">2022-09-01</div>
<div class="td num" style="left:706.50px;top:188.00px;width:78.50px;height:23.50px;line-height:21.50px;text-align:left;background:#f5f7f7;">2022-09-30</div>
<div class="td num" style="left:785.00px;top:188.00px;width:78.50px;height:23.50px;line-height:21.50px;text-align:right;background:#f5f7f7;">15,203.00</div>
<div class="td num" style="left:863.50px;top:188.00px;width:78.50px;height:23.50px;line-height:21.50px;text-align:right;background:#f5f7f7;"></div>
<div class="td num" style="left:942.00px;top:188.00px;width:78.50px;height:23.50px;line-height:21.50px;text-align:right;background:#f5f7f7;">15,203.00</div>
<div class="td " style="left:1020.50px;top:188.00px;width:21.50px;height:23.50px;line-height:21.50px;text-align:left;background:#f5f7f7;"></div>
<div class="td num" style="left:549.50px;top:211.50px;width:78.50px;height:23.50px;line-height:21.50px;text-align:left;">2022-08</div>
<div class="td num" style="left:628.00px;top:211.50px;width:78.50px;height:23.50px;line-height:21.50px;text-align:left;">2022-08-01</div>
<div class="td num" style="left:706.50px;top:211.50px;width:78.50px;height:23.50px;line-height:21.50px;text-align:left;">2022-08-31</div>
<div class="td num" style="left:785.00px;top:211.50px;width:78.50px;height:23.50px;line-height:21.50px;text-align:right;">27,965.00</div>
<div class="td num" style="left:863.50px;top:211.50px;width:78.50px;height:23.50px;line-height:21.50px;text-align:right;"></div>
<div class="td num" style="left:942.00px;top:211.50px;width:78.50px;height:23.50px;line-height:21.50px;text-align:right;">27,965.00</div>
<div class="td " style="left:1020.50px;top:211.50px;width:21.50px;height:23.50px;line-height:21.50px;text-align:left;"></div>
</div>
<div class="t" style="left:716.2px;top:804.5px;color:#888">共 59 条</div>
<div class="pb" style="left:757px;width:15.6px;"><svg width="9.9" height="8.8" viewBox="0 0 9 8"><path d="M4.3 .8 1.2 4l3.1 3.2M8 .8 4.9 4 8 7.2" fill="none" stroke="#5a5a5a" stroke-width="1.02"/></svg></div>
<div class="pb" style="left:775.8px;width:15.3px;"><svg width="9.9" height="8.8" viewBox="0 0 9 8"><path d="M5.8 .8 2.7 4l3.1 3.2" fill="none" stroke="#5a5a5a" stroke-width="1.02"/></svg></div>
<div class="pb" style="left:794.2px;width:15.2px;background:#a9adb5;border-color:#a9adb5;color:#fff;">1</div>
<div class="pb" style="left:812.2px;width:15.2px;">2</div>
<div class="pb" style="left:830.5px;width:15.2px;">3</div>
<div class="pb" style="left:848.8px;width:15.2px;"><svg width="9.9" height="8.8" viewBox="0 0 9 8"><path d="M3.2 .8 6.3 4 3.2 7.2" fill="none" stroke="#5a5a5a" stroke-width="1.02"/></svg></div>
<div class="pb" style="left:867px;width:15.6px;"><svg width="9.9" height="8.8" viewBox="0 0 9 8"><path d="M1 .8 4.1 4 1 7.2M4.7 .8 7.8 4 4.7 7.2" fill="none" stroke="#5a5a5a" stroke-width="1.02"/></svg></div>
<div class="sel" style="left:889px;top:802px;width:50px;height:17px;border-color:#d6d8dc"><span class="t" style="left:6.2px;top:3px;color:#666;font-size:9.8px">20</span><svg class="abs" style="right:7.3px;top:5.3px" width="9" height="6" viewBox="0 0 9 6"><path d="M1 1l3.5 3.5L8 1" fill="none" stroke="#4a4a4a" stroke-width="1.15"/></svg></div>
<div class="t" style="left:945px;top:804.5px;color:#888">条</div>
<div class="t" style="left:960.3px;top:804.5px;color:#888">跳至</div>
<div class="sel" style="left:985.4px;top:802px;width:39.4px;height:17px;border-color:#d6d8dc"></div>
<div class="t" style="left:1031.4px;top:804.5px;color:#888">页</div>

<!-- right strip -->
<div class="abs" style="left:1078.8px;top:0;width:1.2px;height:94px;background:#d3e9fa"></div>
<div class="abs" style="left:1078.2px;top:94px;width:1.8px;height:728px;background:linear-gradient(90deg,#cfd2e6,#b8c3f2)"></div>

</body>
</html>
